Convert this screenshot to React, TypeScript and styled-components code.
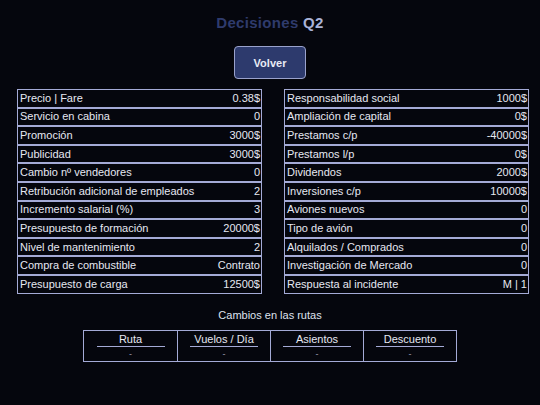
import React from 'react';
import styled, { createGlobalStyle } from 'styled-components';

const GlobalStyle = createGlobalStyle`
    html, body {
        margin: 0;
        padding: 0;
        background: #05060d;
    }
    body {
        font-family: 'Liberation Sans', Arial, sans-serif;
        color: #e6e8f2;
    }
`;

const Page = styled.div`
    width: 540px;
    height: 405px;
    display: flex;
    flex-direction: column;
    align-items: center;
    background: #05060d;
    box-sizing: border-box;
    padding-top: 14px;
`;

const Title = styled.h1`
    margin: 0;
    font-size: 15px;
    font-weight: bold;
    letter-spacing: 0.3px;
    color: #2f3b6c;

    & > span {
        color: #aab3d8;
    }
`;

const BackButton = styled.button`
    margin-top: 15px;
    width: 72px;
    height: 33px;
    background: #2d3a6d;
    color: #e9ebf5;
    border: 1px solid #9aa2cc;
    border-radius: 4px;
    font-family: inherit;
    font-size: 11px;
    font-weight: bold;
    cursor: pointer;
`;

const Tables = styled.div`
    align-self: stretch;
    display: grid;
    grid-template-columns: 245px 245px;
    column-gap: 22px;
    padding-left: 17px;
    margin-top: 10px;
`;

const Table = styled.div`
    border: 1px solid #a4aad6;
    display: flex;
    flex-direction: column;
`;

const Row = styled.div`
    height: 16.6px;
    display: flex;
    align-items: center;
    justify-content: space-between;
    padding: 0 1px 0 2px;
    font-size: 11px;
    line-height: 1;
    white-space: nowrap;

    & + & {
        border-top: 2px solid #a4aad6;
    }
`;

const RoutesTitle = styled.div`
    margin-top: 15px;
    font-size: 11px;
    color: #dfe2ee;
`;

const Routes = styled.div`
    margin-top: 9px;
    display: grid;
    grid-template-columns: repeat(4, 93px);
    border: 1px solid #a4aad6;
`;

const RouteCell = styled.div`
    height: 30px;
    display: flex;
    flex-direction: column;
    align-items: center;
    padding-top: 2px;
    box-sizing: border-box;

    & + & {
        border-left: 1px solid #a4aad6;
    }
`;

const RouteHead = styled.div`
    width: 68px;
    text-align: center;
    font-size: 11px;
    color: #e6e8f2;
    padding-bottom: 1px;
    border-bottom: 1px solid #a4aad6;
`;

const RouteValue = styled.div`
    margin-top: 2px;
    font-size: 9px;
    color: #9a9eb0;
`;

const left: [string, string][] = [
    ['Precio | Fare', '0.38$'],
    ['Servicio en cabina', '0'],
    ['Promoción', '3000$'],
    ['Publicidad', '3000$'],
    ['Cambio nº vendedores', '0'],
    ['Retribución adicional de empleados', '2'],
    ['Incremento salarial (%)', '3'],
    ['Presupuesto de formación', '20000$'],
    ['Nivel de mantenimiento', '2'],
    ['Compra de combustible', 'Contrato'],
    ['Presupuesto de carga', '12500$'],
];

const right: [string, string][] = [
    ['Responsabilidad social', '1000$'],
    ['Ampliación de capital', '0$'],
    ['Prestamos c/p', '-40000$'],
    ['Prestamos l/p', '0$'],
    ['Dividendos', '2000$'],
    ['Inversiones c/p', '10000$'],
    ['Aviones nuevos', '0'],
    ['Tipo de avión', '0'],
    ['Alquilados / Comprados', '0'],
    ['Investigación de Mercado', '0'],
    ['Respuesta al incidente', 'M | 1'],
];

const routeCols = ['Ruta', 'Vuelos / Día', 'Asientos', 'Descuento'];

const DecisionTable = ({ rows }: { rows: [string, string][] }) => (
    <Table>
        {rows.map(([label, value]) => (
            <Row key={label}>
                <span>{label}</span>
                <span>{value}</span>
            </Row>
        ))}
    </Table>
);

export default function App() {
    return (
        <>
            <GlobalStyle />
            <Page>
                <Title>
                    Decisiones <span>Q2</span>
                </Title>
                <BackButton>Volver</BackButton>
                <Tables>
                    <DecisionTable rows={left} />
                    <DecisionTable rows={right} />
                </Tables>
                <RoutesTitle>Cambios en las rutas</RoutesTitle>
                <Routes>
                    {routeCols.map((col) => (
                        <RouteCell key={col}>
                            <RouteHead>{col}</RouteHead>
                            <RouteValue>-</RouteValue>
                        </RouteCell>
                    ))}
                </Routes>
            </Page>
        </>
    );
}
